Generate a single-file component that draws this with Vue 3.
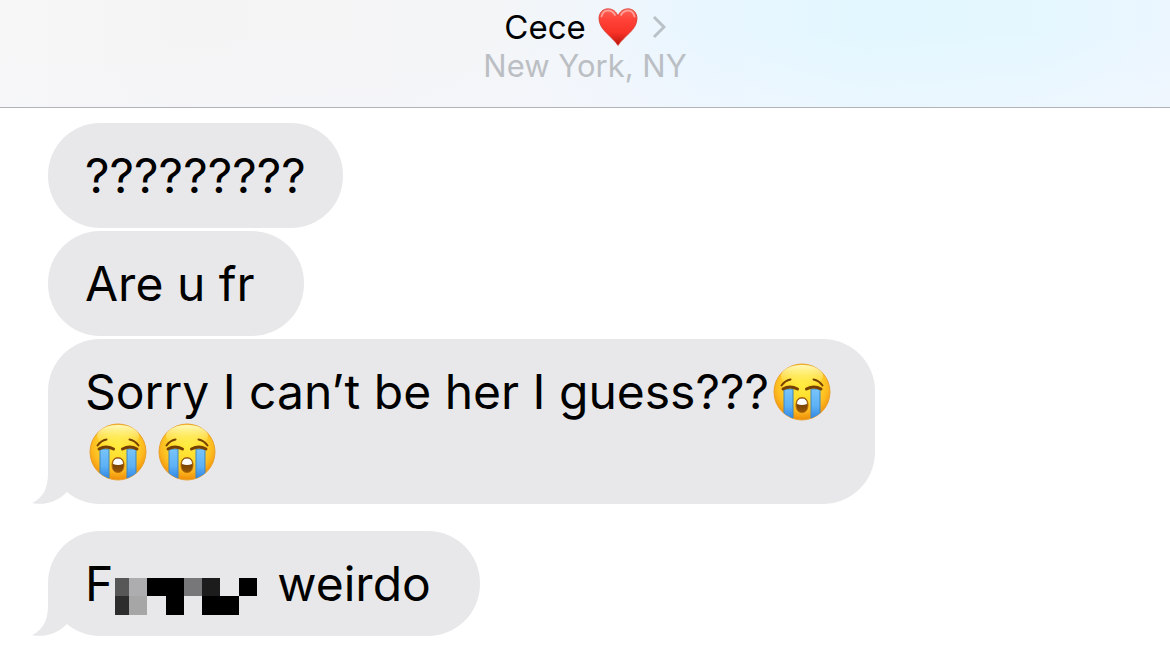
<script setup>
const groups = [
  {
    id: 1,
    messages: [
      { id: 11, lines: [[{ text: '?????????' }]] },
      { id: 12, short: true, lines: [[{ text: 'Are u fr' }]] },
      {
        id: 13,
        tail: true,
        lines: [
          [{ text: 'Sorry I can’t be her I guess???' }, { cry: true }],
          [{ cry: true }, { cry: true }],
        ],
      },
    ],
  },
  {
    id: 2,
    messages: [
      {
        id: 21,
        tail: true,
        short: true,
        lines: [[{ text: 'F' }, { censored: true }, { text: 'weirdo' }]],
      },
    ],
  },
]

const blocks = [
  { x: 0, y: 0, w: 14, fill: '#575757' },
  { x: 14, y: 0, w: 18, fill: '#adadaf' },
  { x: 32, y: 0, w: 37, fill: '#000' },
  { x: 69, y: 0, w: 18, fill: '#777779' },
  { x: 87, y: 0, w: 18, fill: '#1c1c1c' },
  { x: 124, y: 0, w: 18, fill: '#000' },
  { x: 0, y: 18, w: 14, fill: '#2d2d2d' },
  { x: 14, y: 18, w: 18, fill: '#a6a6a6' },
  { x: 51, y: 18, w: 18, fill: '#000' },
  { x: 87, y: 18, w: 37, fill: '#000' },
]
</script>

<template>
  <div class="chat">
    <svg class="defs" width="0" height="0" aria-hidden="true">
      <defs>
        <radialGradient id="face" cx="50%" cy="38%" r="62%">
          <stop offset="0" stop-color="#ffec3e" />
          <stop offset="0.45" stop-color="#ffdb2c" />
          <stop offset="0.75" stop-color="#fdb91f" />
          <stop offset="1" stop-color="#ee8c08" />
        </radialGradient>
        <linearGradient id="shine" x1="0" y1="0" x2="0" y2="1">
          <stop offset="0" stop-color="#fffbc4" stop-opacity="0.95" />
          <stop offset="1" stop-color="#fff25e" stop-opacity="0" />
        </linearGradient>
        <linearGradient id="tears" x1="0" y1="0" x2="0" y2="1">
          <stop offset="0" stop-color="#79c4fb" />
          <stop offset="0.5" stop-color="#5db1f5" />
          <stop offset="1" stop-color="#2277dc" />
        </linearGradient>
        <linearGradient id="mouth" x1="0" y1="0" x2="0" y2="1">
          <stop offset="0" stop-color="#5f3100" />
          <stop offset="1" stop-color="#965708" />
        </linearGradient>
        <clipPath id="round"><circle cx="29" cy="29" r="28" /></clipPath>
        <symbol id="cry" viewBox="0 0 58 58">
          <circle cx="29" cy="29" r="28" fill="url(#face)" stroke="#e9a12c" />
          <ellipse cx="29" cy="13" rx="21" ry="11" fill="url(#shine)" />
          <g clip-path="url(#round)">
            <path d="M11 26H20V60H11Z" fill="url(#tears)" stroke="#3f87be" />
            <path d="M38 26H47V60H38Z" fill="url(#tears)" stroke="#3f87be" />
          </g>
          <g fill="none" stroke="#754000" stroke-linecap="round">
            <path d="M8.500 22.500Q12 17.500 17.500 16.500M49.500 22.500Q46 17.500 40.500 16.500" stroke-width="2" />
            <path d="M10 26Q17 22 24.500 26M48 26Q41 22 33.500 26" stroke-width="3" />
          </g>
          <path d="M29 34.500C33 34.500 35 37.500 35 42C35 47 32.500 49.500 29 49.500S23 47 23 42C23 37.500 25 34.500 29 34.500Z" fill="url(#mouth)" stroke="#b96d08" />
          <path d="M24 41Q24 35.500 29 35.500T34 41Q29 43 24 41Z" fill="#fff" />
        </symbol>
        <linearGradient id="heart-fill" x1="0" y1="0" x2="0" y2="1">
          <stop offset="0" stop-color="#ff6257" />
          <stop offset="0.3" stop-color="#ff4238" />
          <stop offset="0.65" stop-color="#f83227" />
          <stop offset="1" stop-color="#b9140c" />
        </linearGradient>
      </defs>
    </svg>

    <header class="header">
      <button class="contact" type="button">
        <span class="name">Cece</span>
        <svg class="heart" viewBox="0 0 40 38" role="img" aria-label="red heart">
          <path d="M20 37.500C14 28 1 22 1 10.500C1 4.500 5 .800 10 .800C15 .800 18.500 4 20 8C21.500 4 25 .800 30 .800C35 .800 39 4.500 39 10.500C39 22 26 28 20 37.500Z" fill="url(#heart-fill)" stroke="#d83a30" stroke-width=".8" />
          <path d="M3.500 8.500Q5 2.500 10 2.500Q14.500 2.500 17 7M23 7Q25.500 2.500 30 2.500Q35 2.500 36.500 8.500" fill="none" stroke="#ffb0a8" stroke-width="1.800" stroke-linecap="round" opacity=".8" />
        </svg>
        <svg class="chevron" viewBox="0 0 14 24" aria-hidden="true">
          <path d="M2 2L12 12L2 22" />
        </svg>
      </button>
      <div class="place">New York, NY</div>
    </header>

    <main class="thread">
      <section v-for="group in groups" :key="group.id" class="group">
        <div
          v-for="message in group.messages"
          :key="message.id"
          class="bubble"
          :class="{ short: message.short }"
        >
          <div v-for="(line, i) in message.lines" :key="i" class="line">
            <template v-for="(part, j) in line" :key="j">
              <span v-if="part.text">{{ part.text }}</span>
              <svg v-else-if="part.cry" class="emoji" role="img" aria-label="loudly crying face">
                <use href="#cry" />
              </svg>
              <svg v-else class="censor" viewBox="0 0 142 37" shape-rendering="crispEdges" role="img" aria-label="censored">
                <rect
                  v-for="(b, k) in blocks"
                  :key="k"
                  :x="b.x"
                  :y="b.y"
                  :width="b.w"
                  :height="b.y ? 19 : 18"
                  :fill="b.fill"
                />
              </svg>
            </template>
          </div>
          <svg v-if="message.tail" class="tail" viewBox="0 0 40 52" aria-hidden="true">
            <path d="M16 0V22C16 36 11 46 0 51C13 54 26 49 35 40L40 0Z" />
          </svg>
        </div>
      </section>
    </main>
  </div>
</template>

<style>
body {
  margin: 0;
  background: #fff;
}
</style>

<style scoped>
.chat {
  min-height: 100vh;
  background: #fff;
  color: #000;
  font-family: Inter, "Liberation Sans", sans-serif;
}
.defs {
  position: absolute;
}
.header {
  display: flex;
  flex-direction: column;
  align-items: center;
  box-sizing: border-box;
  padding: 6px 16px 24px;
  border-bottom: 1px solid #b0b3b7;
  background:
    linear-gradient(to bottom, rgba(245, 246, 252, 0) 30%, rgba(245, 246, 252, 0.45)),
    linear-gradient(to right, #f7f7f7 0%, #f4f4f4 15%, #f4f5f6 40%, #f1f6fb 50%, #e8f6ff 60%, #e2f7ff 74%, #e4f7ff 88%, #ebf6ff 100%);
}
.contact {
  display: flex;
  align-items: center;
  padding: 0;
  border: 0;
  background: none;
  color: inherit;
  font: inherit;
  font-size: 33px;
  line-height: 42px;
}
.heart {
  width: 40px;
  height: 38px;
  margin-left: 12px;
}
.chevron {
  width: 14px;
  height: 24px;
  margin-left: 14px;
}
.chevron path {
  fill: none;
  stroke: #bac1c7;
  stroke-width: 3;
}
.place {
  color: #bbbfc4;
  font-size: 31px;
  line-height: 35px;
}
.thread {
  display: flex;
  flex-direction: column;
  gap: 27px;
  padding: 15px 48px 32px;
}
.group {
  display: flex;
  flex-direction: column;
  align-items: flex-start;
  gap: 3px;
}
.bubble {
  position: relative;
  padding: 23px 37px 22px;
  border-radius: 52px;
  background: #e8e8ea;
  font-size: 48px;
  line-height: 62px;
}
.short {
  padding-right: 49px;
}
.line {
  display: flex;
  align-items: center;
  height: 60px;
}
.emoji {
  width: 58px;
  height: 58px;
  margin: 0 7px 0 4px;
}
.censor {
  width: 142px;
  height: 37px;
  margin: 24px 20px 0 2px;
}
.tail {
  position: absolute;
  left: -16px;
  bottom: 0;
  width: 40px;
  height: 52px;
}
.tail path {
  fill: #e8e8ea;
}
</style>
